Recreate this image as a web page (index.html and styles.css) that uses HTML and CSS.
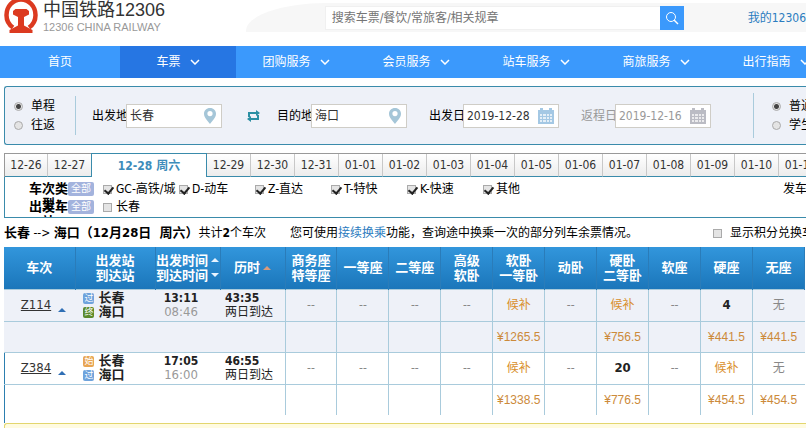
FILE: index.html
```html
<!DOCTYPE html>
<html lang="zh-CN">
<head>
    <meta charset="UTF-8">
    <meta name="viewport" content="width=device-width, initial-scale=1.0">
    <title>中国铁路12306</title>
    <link rel="stylesheet" href="styles.css">
</head>
<body>
    <svg class="sprite" width="0" height="0" aria-hidden="true">
        <symbol id="pin" viewBox="0 0 14 18">
            <path fill="#a5c6d8" fill-rule="evenodd" d="M7 1C3.400 1 1 3.500 1 6.700 1 10.500 4.500 13.500 7 17c2.500-3.500 6-6.500 6-10.300C13 3.500 10.600 1 7 1zm0 3a2.600 2.600 0 1 1 0 5.200A2.600 2.600 0 0 1 7 4z"/>
        </symbol>
        <symbol id="calendar" viewBox="0 0 16 16">
            <path fill="currentColor" d="M0 2h2V0h3v2h6V0h3v2h2v14H0z"/>
            <path fill="#fff" d="M2 6h2v2H2zM5 6h3v2H5zM9 6h2v2H9zM12 6h2v2h-2zM2 9h2v2H2zM5 9h3v2H5zM9 9h2v2H9zM12 9h2v2h-2zM2 12h2v2H2zM5 12h3v2H5zM9 12h2v2H9zM12 12h2v2h-2z" opacity=".7"/>
        </symbol>
        <symbol id="chevron" viewBox="0 0 10 6">
            <path fill="none" stroke="#fff" stroke-width="1.500" d="M1 1l4 4 4-4"/>
        </symbol>
    </svg>

    <header class="header">
        <a class="logo" href="#">
            <svg class="logo-mark" viewBox="0 0 34 38" aria-hidden="true">
                <path fill="none" stroke="#dc3a20" stroke-width="4.500" d="M9 31.500A15 15 0 0 1 2.500 19a14.500 15.500 0 0 1 29 0A15 15 0 0 1 25 31.500"/>
                <path fill="#dc3a20" d="M11.500 13h11l2.500 2v3.500l-5 2.500v8.500l8.500 4.500v3h-23v-3l8.500-4.500V21l-5-2.500V15z"/>
            </svg>
            <span class="logo-text">
                <span class="logo-name">中国铁路12306</span>
                <span class="logo-sub">12306 CHINA RAILWAY</span>
            </span>
        </a>
        <div class="header-right">
            <form class="site-search">
                <input type="text" placeholder="搜索车票/餐饮/常旅客/相关规章" aria-label="搜索">
                <button type="button" aria-label="搜索">
                    <svg viewBox="0 0 14 14" width="14" height="14"><circle cx="6" cy="6" r="4.500" fill="none" stroke="#fff"/><path stroke="#fff" stroke-width="1.500" d="M9 9l4 4"/></svg>
                </button>
            </form>
            <a class="my-link" href="#">我的12306</a>
        </div>
    </header>

    <nav class="nav">
        <a href="#">首页</a>
        <a class="active" href="#">车票<svg><use href="#chevron"/></svg></a>
        <a href="#">团购服务<svg><use href="#chevron"/></svg></a>
        <a href="#">会员服务<svg><use href="#chevron"/></svg></a>
        <a href="#">站车服务<svg><use href="#chevron"/></svg></a>
        <a href="#">商旅服务<svg><use href="#chevron"/></svg></a>
        <a href="#">出行指南<svg><use href="#chevron"/></svg></a>
    </nav>

    <main class="main">
        <form class="query">
            <div class="radios trip">
                <label><input type="radio" name="trip" checked>单程</label>
                <label><input type="radio" name="trip">往返</label>
            </div>
            <div class="field">
                <label for="from">出发地</label>
                <span class="box"><input id="from" type="text" value="长春"><svg class="pin"><use href="#pin"/></svg></span>
            </div>
            <button class="swap" type="button" aria-label="交换">
                <svg viewBox="0 0 13 12" width="13" height="12"><path fill="none" stroke="#2a8fa3" stroke-width="2" d="M2 7V3h8M11 5v4H3"/><path fill="#2a8fa3" d="M9 0l4 3-4 3zM4 6L0 9l4 3z"/></svg>
            </button>
            <div class="field">
                <label for="to">目的地</label>
                <span class="box"><input id="to" type="text" value="海口"><svg class="pin"><use href="#pin"/></svg></span>
            </div>
            <div class="field">
                <label for="depart">出发日</label>
                <span class="box"><input id="depart" type="text" value="2019-12-28"><svg class="cal"><use href="#calendar"/></svg></span>
            </div>
            <div class="field muted">
                <label for="return">返程日</label>
                <span class="box"><input id="return" type="text" value="2019-12-16"><svg class="cal"><use href="#calendar"/></svg></span>
            </div>
            <div class="radios passenger">
                <label><input type="radio" name="passenger" checked>普通</label>
                <label><input type="radio" name="passenger">学生</label>
            </div>
        </form>

        <div class="dates">
            <button type="button">12-26</button>
            <button type="button">12-27</button>
            <button type="button" class="current">12-28 周六</button>
            <button type="button">12-29</button>
            <button type="button">12-30</button>
            <button type="button">12-31</button>
            <button type="button">01-01</button>
            <button type="button">01-02</button>
            <button type="button">01-03</button>
            <button type="button">01-04</button>
            <button type="button">01-05</button>
            <button type="button">01-06</button>
            <button type="button">01-07</button>
            <button type="button">01-08</button>
            <button type="button">01-09</button>
            <button type="button">01-10</button>
            <button type="button">01-11</button>
        </div>

        <div class="filters">
            <div class="filter-row">
                <strong class="filter-name">车次类型：</strong>
                <button class="all" type="button">全部</button>
                <div class="options">
                    <label><input type="checkbox" checked>GC-高铁/城际</label>
                    <label><input type="checkbox" checked>D-动车</label>
                    <label><input type="checkbox" checked>Z-直达</label>
                    <label><input type="checkbox" checked>T-特快</label>
                    <label><input type="checkbox" checked>K-快速</label>
                    <label><input type="checkbox" checked>其他</label>
                </div>
                <span class="depart-time">发车</span>
            </div>
            <div class="filter-row">
                <strong class="filter-name">出发车站：</strong>
                <button class="all" type="button">全部</button>
                <div class="options">
                    <label><input type="checkbox">长春</label>
                </div>
            </div>
        </div>

        <div class="summary">
            <p><strong>长春</strong> --&gt; <strong>海口（12月28日&nbsp; 周六）</strong>共计<b>2</b>个车次</p>
            <p class="tip">您可使用<a href="#">接续换乘</a>功能，查询途中换乘一次的部分列车余票情况。</p>
            <label class="points"><input type="checkbox">显示积分兑换车次</label>
        </div>

        <div class="results">
            <table>
                <colgroup>
                    <col class="col-train"><col class="col-station"><col class="col-time"><col class="col-time">
                    <col span="10">
                </colgroup>
                <thead>
                    <tr>
                        <th>车次</th>
                        <th>出发站<br>到达站</th>
                        <th><span class="sort">出发时间<i class="up"></i></span><span class="sort">到达时间<i class="down"></i></span></th>
                        <th><span class="sort">历时<i class="up on"></i></span></th>
                        <th>商务座<br>特等座</th>
                        <th>一等座</th>
                        <th>二等座</th>
                        <th>高级<br>软卧</th>
                        <th>软卧<br>一等卧</th>
                        <th>动卧</th>
                        <th>硬卧<br>二等卧</th>
                        <th>软座</th>
                        <th>硬座</th>
                        <th>无座</th>
                    </tr>
                </thead>
                <tbody class="shade">
                    <tr>
                        <td class="train"><a href="#">Z114</a><i class="fold"></i></td>
                        <td class="station"><div><span class="tag pass">过</span>长春</div><div><span class="tag end">终</span>海口</div></td>
                        <td class="time"><b>13:11</b><span>08:46</span></td>
                        <td class="lasts"><b>43:35</b><span>两日到达</span></td>
                        <td>--</td><td>--</td><td>--</td><td>--</td>
                        <td class="wait">候补</td><td>--</td><td class="wait">候补</td><td>--</td>
                        <td class="left">4</td><td>无</td>
                    </tr>
                    <tr class="prices">
                        <td class="blank" colspan="4"></td><td></td><td></td><td></td><td></td>
                        <td>¥1265.5</td><td></td><td>¥756.5</td><td></td><td>¥441.5</td><td>¥441.5</td>
                    </tr>
                </tbody>
                <tbody>
                    <tr>
                        <td class="train"><a href="#">Z384</a><i class="fold"></i></td>
                        <td class="station"><div><span class="tag start">始</span>长春</div><div><span class="tag pass">过</span>海口</div></td>
                        <td class="time"><b>17:05</b><span>16:00</span></td>
                        <td class="lasts"><b>46:55</b><span>两日到达</span></td>
                        <td>--</td><td>--</td><td>--</td><td>--</td>
                        <td class="wait">候补</td><td>--</td><td class="left">20</td><td>--</td>
                        <td class="wait">候补</td><td>无</td>
                    </tr>
                    <tr class="prices">
                        <td class="blank" colspan="4"></td><td></td><td></td><td></td><td></td>
                        <td>¥1338.5</td><td></td><td>¥776.5</td><td></td><td>¥454.5</td><td>¥454.5</td>
                    </tr>
                </tbody>
            </table>
        </div>
        <div class="notice"></div>
    </main>
</body>
</html>
```
FILE: styles.css
```css
* {
    margin: 0;
    padding: 0;
    box-sizing: border-box;
}

body {
    font: 12px/14px "DejaVu Sans Condensed", "Noto Sans CJK SC", sans-serif;
    color: #000;
    background: #fff;
    overflow: hidden;
}

button, input {
    font: inherit;
    color: inherit;
}

button {
    border: 0;
    cursor: pointer;
}

a {
    color: #2b7cc0;
    text-decoration: none;
}

.sprite {
    display: block;
}

/* header */
.header {
    display: flex;
    justify-content: space-between;
    height: 46px;
    overflow: hidden;
}

.logo {
    display: flex;
    padding-left: 4px;
    font-family: "Liberation Sans", "Noto Sans CJK SC", sans-serif;
}

.logo-mark {
    width: 34px;
    height: 38px;
    margin-top: -4px;
}

.logo-text {
    display: flex;
    flex-direction: column;
    padding-left: 5px;
}

.logo-name {
    font-size: 18px;
    line-height: 20px;
    color: #333;
}

.logo-sub {
    font-size: 11px;
    line-height: 14px;
    color: #999;
}

.header-right {
    display: flex;
    align-items: center;
    height: 29px;
    margin-top: 3px;
    padding-left: 79px;
    background: #f7f7f7;
    border-top-left-radius: 80px 28px;
    white-space: nowrap;
}

.site-search {
    display: flex;
}

.site-search input {
    width: 335px;
    height: 24px;
    padding: 0 6px;
    border: 1px solid #f0f0f0;
    border-right: 0;
    background: #fff;
}

.site-search input::placeholder {
    color: #757575;
}

.site-search button {
    display: grid;
    place-items: center;
    width: 24px;
    height: 24px;
    background: #3b99fc;
}

.my-link {
    margin-left: 64px;
}

/* nav */
.nav {
    display: flex;
    height: 32px;
    background: #3b99fc;
}

.nav a {
    display: flex;
    flex: 0 0 120px;
    align-items: center;
    justify-content: center;
    gap: 9px;
    color: #fff;
}

.nav .active {
    flex-basis: 116px;
    background: #2676e3;
}

.nav svg {
    width: 10px;
    height: 6px;
}

.main {
    padding: 8px 0 0 4px;
}

/* query form */
.query {
    display: flex;
    align-items: center;
    height: 59px;
    border: 1px solid #3a8bab;
    border-right: 0;
    border-radius: 3px 0 0 3px;
    background: #eef1f8;
    white-space: nowrap;
}

input[type="radio"],
input[type="checkbox"] {
    appearance: none;
    flex: none;
    width: 9px;
    height: 9px;
    border: 1px solid #aaa;
    background: #e4e4e4;
}

input[type="radio"] {
    border-radius: 50%;
}

input[type="radio"]:checked {
    background: radial-gradient(#444 0 2px, #e4e4e4 3px);
}

/* tick mark */
input[type="checkbox"]:checked::before {
    content: "";
    display: block;
    width: 4px;
    height: 7px;
    margin: -1px 0 0 2px;
    border: solid #222;
    border-width: 0 2px 2px 0;
    transform: rotate(40deg);
}

.radios {
    display: flex;
    flex: none;
    flex-direction: column;
    gap: 5px;
}

.radios label {
    display: flex;
    align-items: center;
    gap: 8px;
}

.trip {
    width: 71px;
    padding: 3px 0 3px 9px;
    border-right: 1px solid #a9cbdc;
}

.field {
    display: flex;
    flex: none;
    align-items: center;
    margin-left: 22px;
}

.field label {
    width: 34px;
}

.trip + .field {
    margin-left: 16px;
}

.box {
    display: flex;
    align-items: center;
    width: 96px;
    height: 24px;
    padding: 0 4px 0 3px;
    border: 1px solid #cfcdc7;
    background: #fff;
    color: #333;
    z-index: 1;
}

.box input {
    flex: 1;
    min-width: 0;
    border: 0;
    outline: 0;
    background: none;
}

.box svg {
    flex: none;
    width: 16px;
    height: 16px;
    color: #a4c8e4;
}

.box .pin {
    width: 14px;
    height: 18px;
}

.muted,
.muted .box {
    color: #999;
}

.muted .box svg {
    color: #bbbcc4;
}

.swap {
    display: flex;
    margin: 0 -5px 0 25px;
    background: none;
}

.passenger {
    margin-left: 42px;
    padding: 6px 0 6px 18px;
    border-left: 1px solid #a9cbdc;
}

/* date tabs */
.dates {
    display: flex;
    height: 24px;
    margin-top: 8px;
    border: 1px solid #999;
    border-width: 1px 0 0 1px;
}

.dates button {
    flex: 0 0 44px;
    border-right: 1px solid #c8c8c8;
    border-bottom: 1px solid #3a8bab;
    background: linear-gradient(#fff, #ececec);
    color: #333;
}

.dates button:first-child {
    flex-basis: 43px;
}

.dates .current {
    flex-basis: 116px;
    margin: -1px 0 0 -1px;
    border: 1px solid #3a8bab;
    border-bottom: 0;
    background: #fff;
    font-weight: bold;
    color: #3d8cba;
}

/* filters */
.filters {
    height: 41px;
    padding-top: 4px;
    border: 1px solid #3a8bab;
    border-width: 0 0 1px 1px;
    overflow: hidden;
}

.filter-row {
    display: flex;
    align-items: flex-start;
    height: 18px;
    line-height: 16px;
    white-space: nowrap;
}

.filter-name {
    flex: none;
    width: 40px;
    margin-left: 23px;
    font-size: 13px;
    line-height: 15px;
    text-align: right;
    white-space: normal;
}

.all {
    flex: none;
    width: 26px;
    height: 14px;
    margin-top: 1px;
    border-radius: 2px;
    background: #a3b3dd;
    color: #fff;
    font-size: 10px;
    line-height: 14px;
}

.options {
    display: flex;
    flex: 1;
    gap: 3px;
    padding-left: 9px;
}

.options label {
    flex: 0 0 73px;
    overflow: hidden;
}

.options input,
.points input {
    margin-right: 4px;
    vertical-align: -1px;
}

.depart-time {
    flex: none;
    width: 23px;
}

/* summary line */
.summary {
    display: flex;
    align-items: center;
    height: 29px;
    white-space: nowrap;
}

.summary strong {
    font-size: 13px;
}

.tip {
    margin-left: 24px;
}

.points {
    margin-left: auto;
    width: 93px;
}

.points input {
    margin-right: 8px;
}

/* results */
.results {
    padding-bottom: 8px;
    border-left: 1px solid #2c7fb0;
}

table {
    width: 100%;
    margin-left: -1px;
    table-layout: fixed;
    border-collapse: collapse;
}

.col-train {
    width: 71px;
}

.col-station {
    width: 80px;
}

.col-time {
    width: 65px;
}

thead tr {
    height: 42px;
    background: linear-gradient(#3296dc, #1b76ba);
}

th {
    border-right: 1px solid #2a7cb9;
    color: #fff;
    font-size: 13px;
    line-height: 15px;
    white-space: nowrap;
}

.sort {
    display: flex;
    align-items: center;
    justify-content: center;
    gap: 3px;
}

.sort i,
.fold {
    border: 4px solid transparent;
    border-top: 0;
    border-bottom-color: #e8f4ff;
}

.sort .down {
    border-top: 4px solid #e8f4ff;
    border-bottom: 0;
}

.sort .on {
    border-bottom-color: #d99a7c;
}

td {
    height: 32px;
    border: solid #a9cbdc;
    border-width: 1px 0 0 1px;
    color: #888;
    text-align: center;
    white-space: nowrap;
}

.train,
.station,
.time,
.lasts,
.prices .blank {
    border-left: 0;
}

.prices td {
    height: 31px;
    color: #cc8a3a;
    font-family: "Liberation Sans", sans-serif;
}

.shade {
    background: #eef1f8;
}

.train {
    padding-left: 8px;
}

.train a {
    color: #333;
    font-size: 13px;
    text-decoration: underline;
}

.fold {
    display: inline-block;
    margin-left: 7px;
    border-bottom-color: #2f6fb5;
    vertical-align: -3px;
}

.station {
    color: #222;
    font-size: 13px;
    font-weight: bold;
}

.station div {
    display: flex;
    align-items: center;
    justify-content: center;
    gap: 4px;
    padding-right: 22px;
}

.tag {
    width: 11px;
    height: 11px;
    border-radius: 2px;
    color: #fff;
    font-size: 9px;
    font-weight: normal;
    line-height: 11px;
}

.pass {
    background: #6fa3dc;
}

.end {
    background: #5c8a2c;
}

.start {
    background: #e8a552;
}

.time b,
.time span,
.lasts b,
.lasts span {
    display: block;
}

.time {
    padding-right: 13px;
    color: #999;
    font-size: 13px;
}

.time b,
.lasts b {
    font-size: 12px;
    color: #222;
}

.lasts {
    padding-left: 5px;
    color: #222;
    text-align: left;
}

.wait {
    color: #d98f2b;
}

.left {
    color: #222;
    font-size: 13px;
    font-weight: bold;
}

.notice {
    height: 20px;
    border-top: 1px solid #e3d66e;
    border-left: 1px solid #e3d66e;
    border-top-left-radius: 3px;
    background: #fffbe0;
}
```
